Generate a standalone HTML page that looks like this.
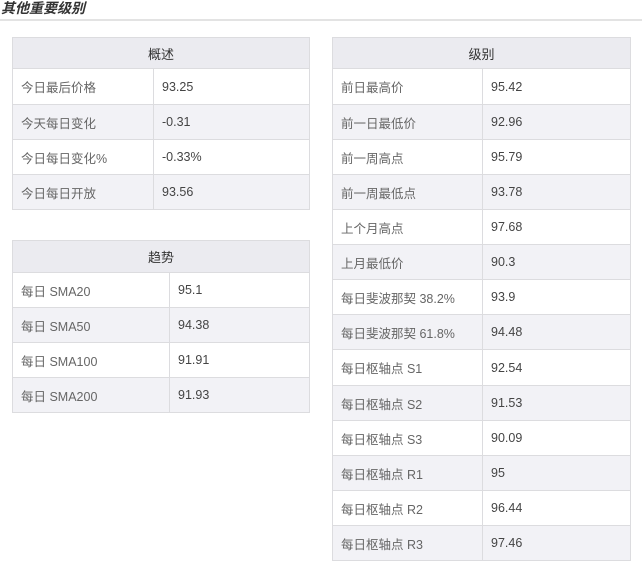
<!DOCTYPE html>
<html><head><meta charset="utf-8"><style>
*{margin:0;padding:0;box-sizing:border-box}
body{width:642px;height:571px;background:#fff;font-family:"Liberation Sans","Noto Sans CJK SC",sans-serif;position:relative;overflow:hidden}
h1{position:absolute;left:1px;top:0;font-size:14px;font-style:italic;font-weight:bold;color:#333;line-height:17px}
.ul{position:absolute;left:0;top:19px;width:642px;height:2px;background:#e3e3e3}
table{position:absolute;border-collapse:collapse;table-layout:fixed;font-size:12.5px}
td,th{border:1px solid #dcdcdf;padding:0 0 0 8px;text-align:left;white-space:nowrap}
th{background:#ebebf0;font-weight:normal;color:#333;text-align:center;padding:0;font-size:13px}
td{color:#666}
td+td{color:#444}
tr:nth-child(odd) td{background:#f2f2f6}
tr:nth-child(even) td{background:#fff}
</style></head><body>
<h1>其他重要级别</h1><div class="ul"></div>

<table style="left:12px;top:37px;width:298px">
<col style="width:141px"><col>
<tr style="height:31px"><th colspan="2">概述</th></tr>
<tr style="height:36px"><td>今日最后价格</td><td>93.25</td></tr>
<tr style="height:35px"><td>今天每日变化</td><td>-0.31</td></tr>
<tr style="height:35px"><td>今日每日变化%</td><td>-0.33%</td></tr>
<tr style="height:35px"><td>今日每日开放</td><td>93.56</td></tr>
</table>

<table style="left:12px;top:240px;width:298px">
<col style="width:157px"><col>
<tr style="height:32px"><th colspan="2">趋势</th></tr>
<tr style="height:35px"><td>每日 SMA20</td><td>95.1</td></tr>
<tr style="height:35px"><td>每日 SMA50</td><td>94.38</td></tr>
<tr style="height:35px"><td>每日 SMA100</td><td>91.91</td></tr>
<tr style="height:35px"><td>每日 SMA200</td><td>91.93</td></tr>
</table>

<table style="left:332px;top:37px;width:299px">
<col style="width:150px"><col>
<tr style="height:31px"><th colspan="2">级别</th></tr>
<tr style="height:36px"><td>前日最高价</td><td>95.42</td></tr>
<tr style="height:35px"><td>前一日最低价</td><td>92.96</td></tr>
<tr style="height:35px"><td>前一周高点</td><td>95.79</td></tr>
<tr style="height:35px"><td>前一周最低点</td><td>93.78</td></tr>
<tr style="height:35px"><td>上个月高点</td><td>97.68</td></tr>
<tr style="height:35px"><td>上月最低价</td><td>90.3</td></tr>
<tr style="height:35px"><td>每日斐波那契 38.2%</td><td>93.9</td></tr>
<tr style="height:35px"><td>每日斐波那契 61.8%</td><td>94.48</td></tr>
<tr style="height:36px"><td>每日枢轴点 S1</td><td>92.54</td></tr>
<tr style="height:35px"><td>每日枢轴点 S2</td><td>91.53</td></tr>
<tr style="height:35px"><td>每日枢轴点 S3</td><td>90.09</td></tr>
<tr style="height:35px"><td>每日枢轴点 R1</td><td>95</td></tr>
<tr style="height:35px"><td>每日枢轴点 R2</td><td>96.44</td></tr>
<tr style="height:35px"><td>每日枢轴点 R3</td><td>97.46</td></tr>
</table>
</body></html>
